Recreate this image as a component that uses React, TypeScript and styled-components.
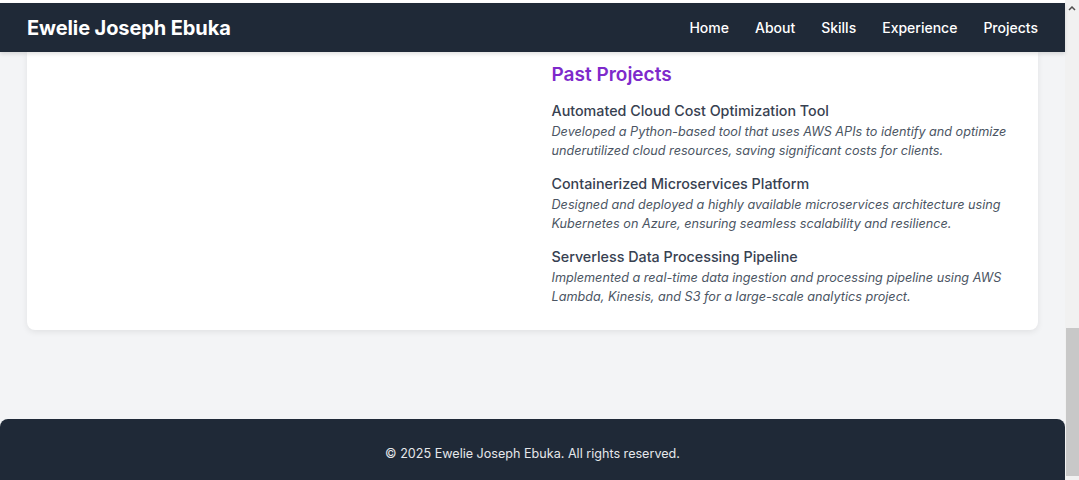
import React, { FC } from 'react';
import styled, { createGlobalStyle } from 'styled-components';

const colors = {
  navy: '#1f2937',
  page: '#f3f4f6',
  purple: '#7e2acb',
  title: '#374151',
  text: '#4b5563',
  track: '#f1f1f1',
  thumb: '#c8c8c8',
};

const GlobalStyle = createGlobalStyle`
  html, body {
    margin: 0;
    padding: 0;
    overflow: hidden;
    background: #ffffff;
  }

  body {
    font-family: Inter, "Noto Sans", sans-serif;
  }
`;

const Window = styled.div`
  display: flex;
  width: 1079px;
  height: 480px;
  overflow: hidden;
`;

const Page = styled.div`
  display: flex;
  flex-direction: column;
  flex: 1;
  min-width: 0;
  background: ${colors.page};
`;

const TopEdge = styled.div`
  height: 3px;
  background: #ffffff;
  flex-shrink: 0;
`;

const Header = styled.header`
  display: flex;
  align-items: center;
  justify-content: space-between;
  height: 49px;
  padding: 0 27px;
  flex-shrink: 0;
  background: ${colors.navy};
  box-shadow: 0 2px 4px rgba(0, 0, 0, 0.12);
  position: relative;
  z-index: 1;
`;

const Brand = styled.div`
  color: #ffffff;
  font-size: 20px;
  font-weight: 700;
  letter-spacing: -0.1px;
`;

const Nav = styled.nav`
  display: flex;
  gap: 26px;
`;

const NavLink = styled.a`
  color: #ffffff;
  font-size: 14px;
  font-weight: 500;
  text-decoration: none;
`;

const Main = styled.main`
  display: flex;
  flex-direction: column;
  padding: 0 27px;
  flex-shrink: 0;
`;

const Card = styled.section`
  display: grid;
  grid-template-columns: 1fr 1fr;
  column-gap: 38px;
  padding: 9px 24px 24px;
  margin-bottom: 89px;
  background: #ffffff;
  border-radius: 0 0 8px 8px;
  box-shadow: 0 2px 6px rgba(0, 0, 0, 0.08);
`;

const Column = styled.div`
  display: flex;
  flex-direction: column;
`;

const SectionTitle = styled.h2`
  margin: 0 0 11px;
  color: ${colors.purple};
  font-size: 19px;
  line-height: 28px;
  font-weight: 600;
`;

const Project = styled.div`
  margin-bottom: 13px;

  &:last-child {
    margin-bottom: 0;
  }
`;

const ProjectTitle = styled.h3`
  margin: 0;
  color: ${colors.title};
  font-size: 14.3px;
  line-height: 22px;
  font-weight: 500;
`;

const ProjectText = styled.p`
  margin: 0;
  color: ${colors.text};
  font-size: 12.65px;
  line-height: 19px;
  font-style: italic;
`;

const Footer = styled.footer`
  flex-shrink: 0;
  height: 90px;
  padding-top: 25px;
  box-sizing: border-box;
  background: ${colors.navy};
  border-radius: 8px 8px 0 0;
  color: #e5e7eb;
  font-size: 12.6px;
  line-height: 20px;
  text-align: center;
`;

const ScrollTrack = styled.div`
  display: flex;
  flex-direction: column;
  width: 14px;
  flex-shrink: 0;
  background: ${colors.track};
`;

const ScrollArrow = styled.div`
  display: flex;
  align-items: center;
  justify-content: center;
  height: 17px;
  color: #505050;
`;

const ScrollSpace = styled.div`
  flex: 1;
`;

const ScrollThumb = styled.div`
  height: 148px;
  margin: 0 0 4px 1px;
  background: ${colors.thumb};
`;

const projects = [
  {
    title: 'Automated Cloud Cost Optimization Tool',
    text: 'Developed a Python-based tool that uses AWS APIs to identify and optimize underutilized cloud resources, saving significant costs for clients.',
  },
  {
    title: 'Containerized Microservices Platform',
    text: 'Designed and deployed a highly available microservices architecture using Kubernetes on Azure, ensuring seamless scalability and resilience.',
  },
  {
    title: 'Serverless Data Processing Pipeline',
    text: 'Implemented a real-time data ingestion and processing pipeline using AWS Lambda, Kinesis, and S3 for a large-scale analytics project.',
  },
];

const links = ['Home', 'About', 'Skills', 'Experience', 'Projects'];

const App: FC = () => (
  <>
    <GlobalStyle />
    <Window>
      <Page>
        <TopEdge />
        <Header>
          <Brand>Ewelie Joseph Ebuka</Brand>
          <Nav>
            {links.map((link) => (
              <NavLink key={link} href={`#${link.toLowerCase()}`}>{link}</NavLink>
            ))}
          </Nav>
        </Header>
        <Main>
          <Card>
            <Column />
            <Column>
              <SectionTitle>Past Projects</SectionTitle>
              {projects.map((project) => (
                <Project key={project.title}>
                  <ProjectTitle>{project.title}</ProjectTitle>
                  <ProjectText>{project.text}</ProjectText>
                </Project>
              ))}
            </Column>
          </Card>
        </Main>
        <Footer>© 2025 Ewelie Joseph Ebuka. All rights reserved.</Footer>
      </Page>
      <ScrollTrack>
        <ScrollArrow>
          <svg width="8" height="5" viewBox="0 0 8 5">
            <path d="M1 4 L4 1 L7 4" fill="none" stroke="currentColor" strokeWidth="1.5" />
          </svg>
        </ScrollArrow>
        <ScrollSpace />
        <ScrollThumb />
      </ScrollTrack>
    </Window>
  </>
);

export default App;
